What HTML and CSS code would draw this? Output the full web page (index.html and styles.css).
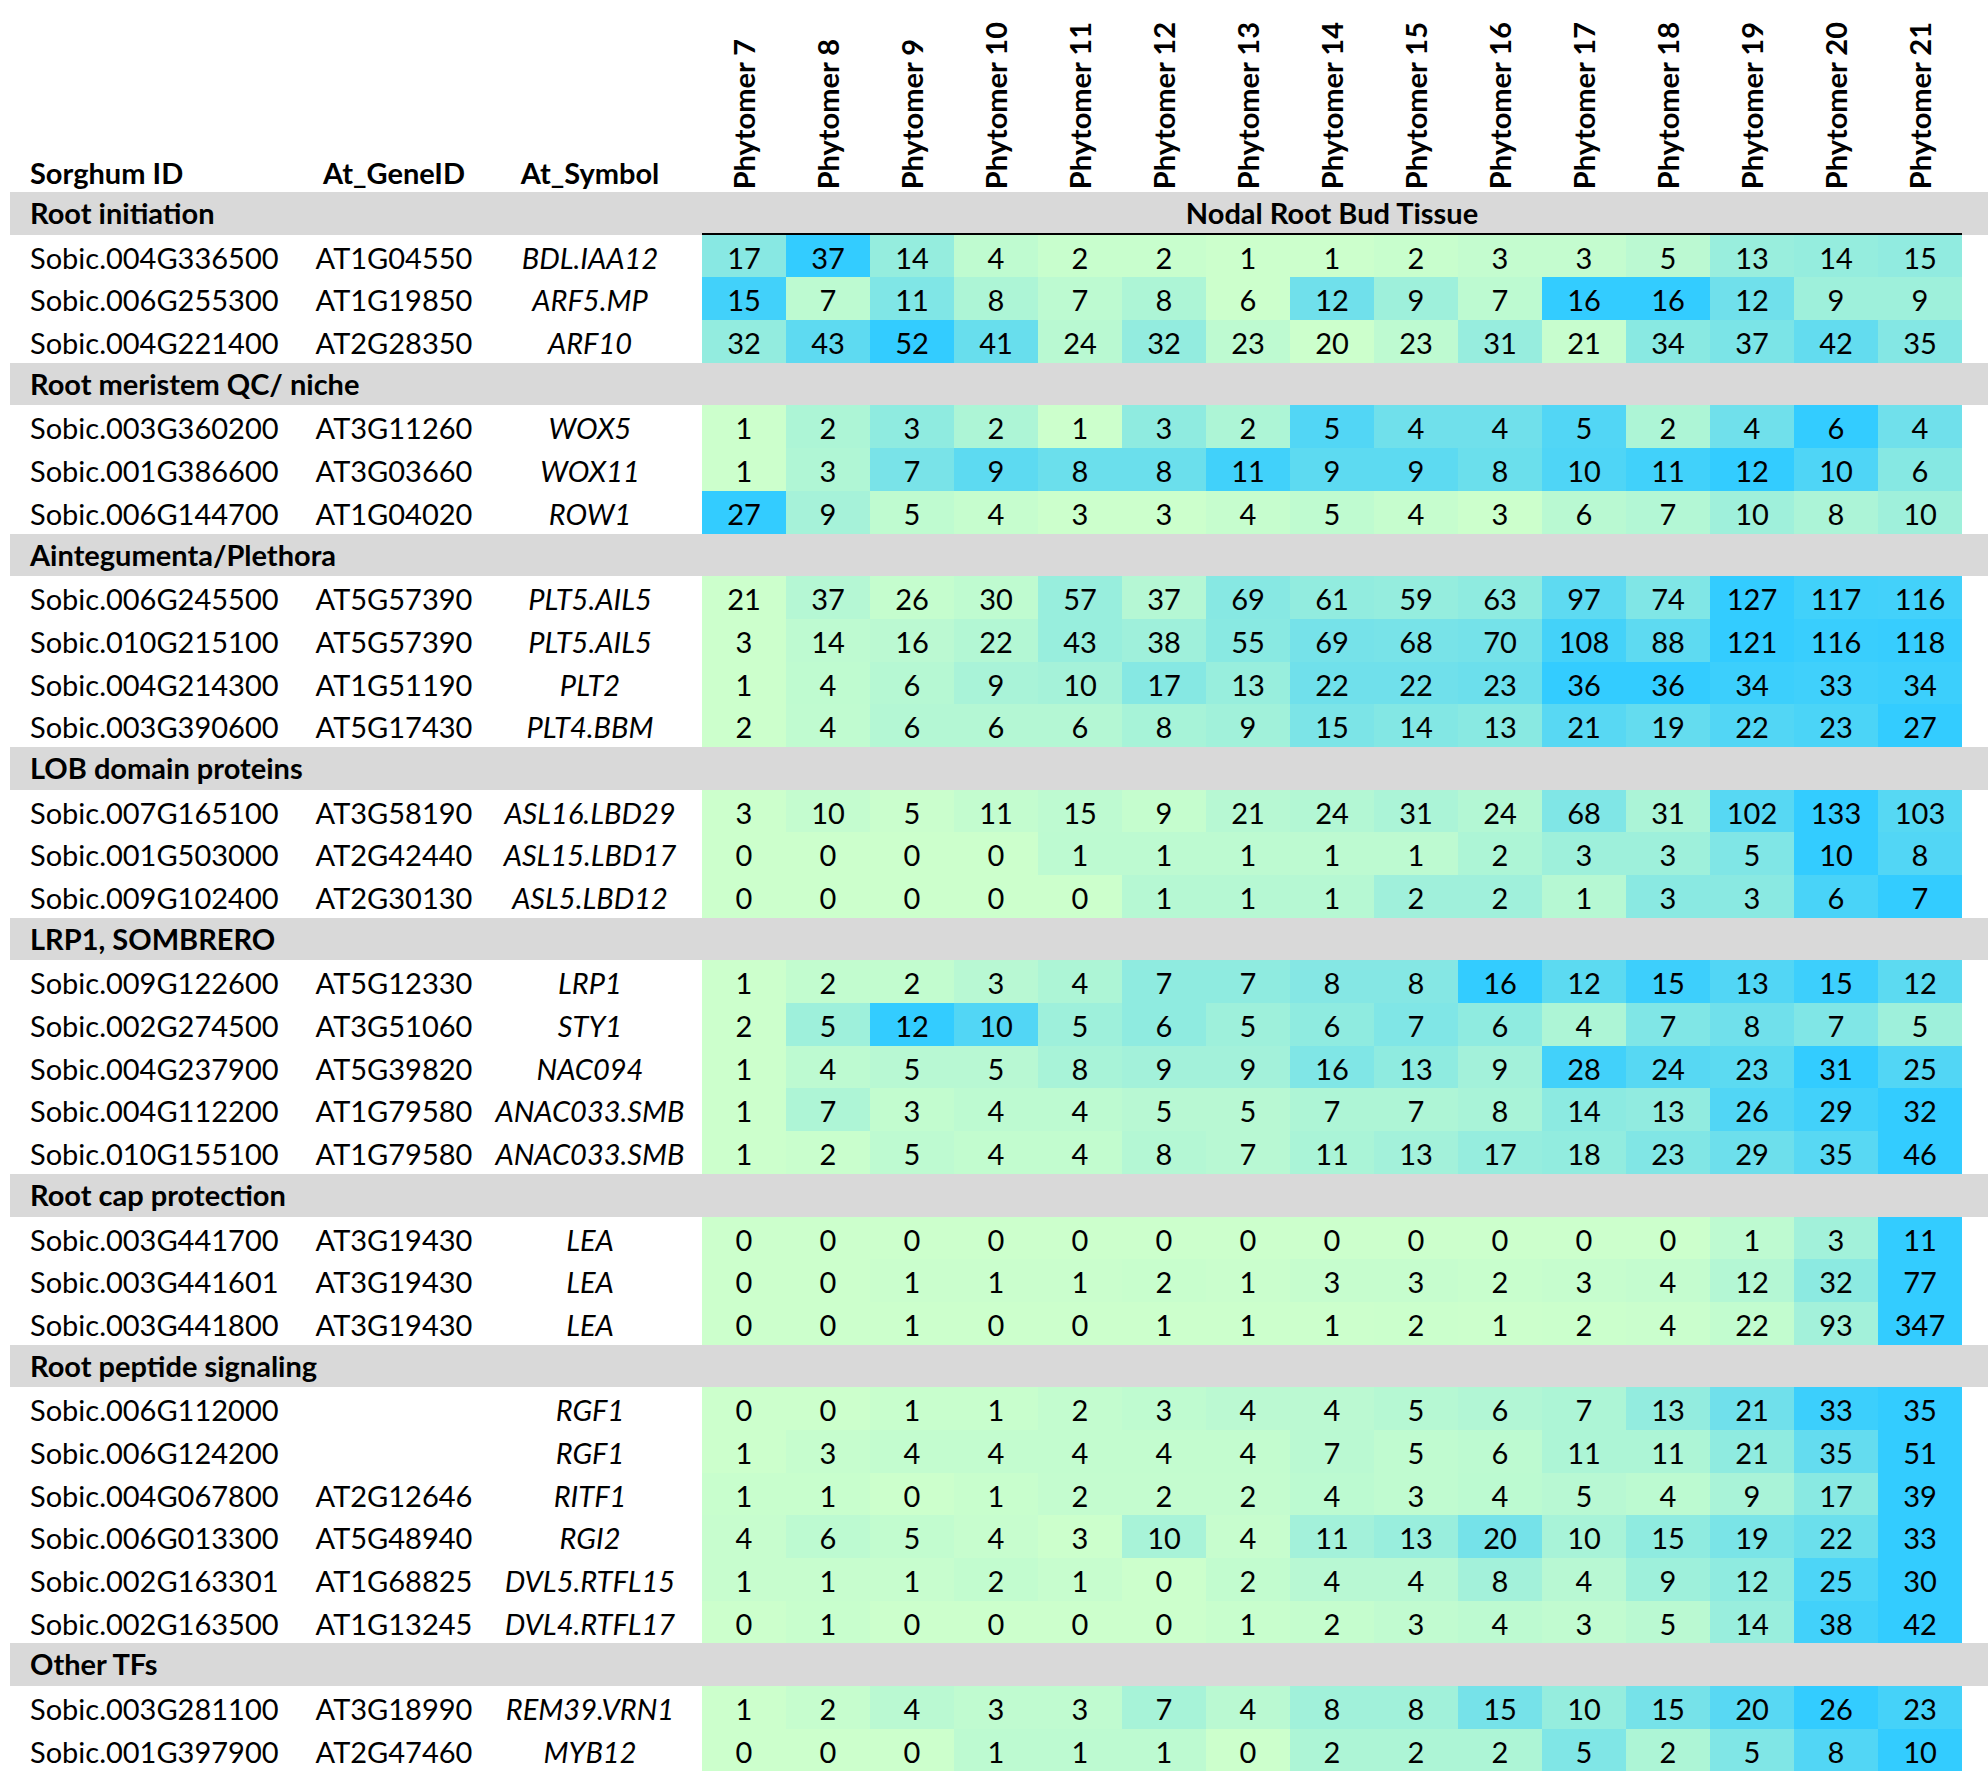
FILE: index.html
```html
<!DOCTYPE html>
<html lang="en">
<head>
    <meta charset="UTF-8">
    <title>Nodal Root Bud Tissue - gene expression</title>
    <link rel="stylesheet" href="styles.css">
</head>
<body>
    <div class="sheet">
        <div class="row head" id="head">
            <div class="cell id">Sorghum ID</div>
            <div class="cell gene">At_GeneID</div>
            <div class="cell sym">At_Symbol</div>
        </div>
        <div id="rows"></div>
    </div>

    <script>
        const groups = [
            ["Root initiation", [
                ["Sobic.004G336500", "AT1G04550", "BDL.IAA12", [17, 37, 14, 4, 2, 2, 1, 1, 2, 3, 3, 5, 13, 14, 15]],
                ["Sobic.006G255300", "AT1G19850", "ARF5.MP", [15, 7, 11, 8, 7, 8, 6, 12, 9, 7, 16, 16, 12, 9, 9]],
                ["Sobic.004G221400", "AT2G28350", "ARF10", [32, 43, 52, 41, 24, 32, 23, 20, 23, 31, 21, 34, 37, 42, 35]]
            ]],
            ["Root meristem QC/ niche", [
                ["Sobic.003G360200", "AT3G11260", "WOX5", [1, 2, 3, 2, 1, 3, 2, 5, 4, 4, 5, 2, 4, 6, 4]],
                ["Sobic.001G386600", "AT3G03660", "WOX11", [1, 3, 7, 9, 8, 8, 11, 9, 9, 8, 10, 11, 12, 10, 6]],
                ["Sobic.006G144700", "AT1G04020", "ROW1", [27, 9, 5, 4, 3, 3, 4, 5, 4, 3, 6, 7, 10, 8, 10]]
            ]],
            ["Aintegumenta/Plethora", [
                ["Sobic.006G245500", "AT5G57390", "PLT5.AIL5", [21, 37, 26, 30, 57, 37, 69, 61, 59, 63, 97, 74, 127, 117, 116]],
                ["Sobic.010G215100", "AT5G57390", "PLT5.AIL5", [3, 14, 16, 22, 43, 38, 55, 69, 68, 70, 108, 88, 121, 116, 118]],
                ["Sobic.004G214300", "AT1G51190", "PLT2", [1, 4, 6, 9, 10, 17, 13, 22, 22, 23, 36, 36, 34, 33, 34]],
                ["Sobic.003G390600", "AT5G17430", "PLT4.BBM", [2, 4, 6, 6, 6, 8, 9, 15, 14, 13, 21, 19, 22, 23, 27]]
            ]],
            ["LOB domain proteins", [
                ["Sobic.007G165100", "AT3G58190", "ASL16.LBD29", [3, 10, 5, 11, 15, 9, 21, 24, 31, 24, 68, 31, 102, 133, 103]],
                ["Sobic.001G503000", "AT2G42440", "ASL15.LBD17", [0, 0, 0, 0, 1, 1, 1, 1, 1, 2, 3, 3, 5, 10, 8]],
                ["Sobic.009G102400", "AT2G30130", "ASL5.LBD12", [0, 0, 0, 0, 0, 1, 1, 1, 2, 2, 1, 3, 3, 6, 7]]
            ]],
            ["LRP1, SOMBRERO", [
                ["Sobic.009G122600", "AT5G12330", "LRP1", [1, 2, 2, 3, 4, 7, 7, 8, 8, 16, 12, 15, 13, 15, 12]],
                ["Sobic.002G274500", "AT3G51060", "STY1", [2, 5, 12, 10, 5, 6, 5, 6, 7, 6, 4, 7, 8, 7, 5]],
                ["Sobic.004G237900", "AT5G39820", "NAC094", [1, 4, 5, 5, 8, 9, 9, 16, 13, 9, 28, 24, 23, 31, 25]],
                ["Sobic.004G112200", "AT1G79580", "ANAC033.SMB", [1, 7, 3, 4, 4, 5, 5, 7, 7, 8, 14, 13, 26, 29, 32]],
                ["Sobic.010G155100", "AT1G79580", "ANAC033.SMB", [1, 2, 5, 4, 4, 8, 7, 11, 13, 17, 18, 23, 29, 35, 46]]
            ]],
            ["Root cap protection", [
                ["Sobic.003G441700", "AT3G19430", "LEA", [0, 0, 0, 0, 0, 0, 0, 0, 0, 0, 0, 0, 1, 3, 11]],
                ["Sobic.003G441601", "AT3G19430", "LEA", [0, 0, 1, 1, 1, 2, 1, 3, 3, 2, 3, 4, 12, 32, 77]],
                ["Sobic.003G441800", "AT3G19430", "LEA", [0, 0, 1, 0, 0, 1, 1, 1, 2, 1, 2, 4, 22, 93, 347]]
            ]],
            ["Root peptide signaling", [
                ["Sobic.006G112000", "", "RGF1", [0, 0, 1, 1, 2, 3, 4, 4, 5, 6, 7, 13, 21, 33, 35]],
                ["Sobic.006G124200", "", "RGF1", [1, 3, 4, 4, 4, 4, 4, 7, 5, 6, 11, 11, 21, 35, 51]],
                ["Sobic.004G067800", "AT2G12646", "RITF1", [1, 1, 0, 1, 2, 2, 2, 4, 3, 4, 5, 4, 9, 17, 39]],
                ["Sobic.006G013300", "AT5G48940", "RGI2", [4, 6, 5, 4, 3, 10, 4, 11, 13, 20, 10, 15, 19, 22, 33]],
                ["Sobic.002G163301", "AT1G68825", "DVL5.RTFL15", [1, 1, 1, 2, 1, 0, 2, 4, 4, 8, 4, 9, 12, 25, 30]],
                ["Sobic.002G163500", "AT1G13245", "DVL4.RTFL17", [0, 1, 0, 0, 0, 0, 1, 2, 3, 4, 3, 5, 14, 38, 42]]
            ]],
            ["Other TFs", [
                ["Sobic.003G281100", "AT3G18990", "REM39.VRN1", [1, 2, 4, 3, 3, 7, 4, 8, 8, 15, 10, 15, 20, 26, 23]],
                ["Sobic.001G397900", "AT2G47460", "MYB12", [0, 0, 0, 1, 1, 1, 0, 2, 2, 2, 5, 2, 5, 8, 10]]
            ]]
        ];

        // two-colour scale per row, like the spreadsheet: light green -> sky blue
        const low = [204, 255, 204];
        const high = [51, 204, 255];

        function shade(v, min, max) {
            let t = max > min ? (v - min) / (max - min) : 0;
            let rgb = low.map((c, i) => Math.round(c + (high[i] - c) * t));
            return `rgb(${rgb.join(",")})`;
        }

        function cell(cls, text) {
            let div = document.createElement("div");
            div.className = "cell " + cls;
            div.textContent = text;
            return div;
        }

        let head = document.getElementById("head");
        for (let p = 7; p <= 21; p++) {
            let th = document.createElement("div");
            th.className = "cell phy";
            th.innerHTML = `<span>Phytomer ${p}</span>`;
            head.appendChild(th);
        }

        let rows = document.getElementById("rows");
        groups.forEach(([title, genes], gi) => {
            let sec = document.createElement("div");
            sec.className = "row section";
            sec.appendChild(cell("title", title));
            if (gi === 0) sec.appendChild(cell("tissue", "Nodal Root Bud Tissue"));
            rows.appendChild(sec);

            genes.forEach(([id, gene, sym, values]) => {
                let row = document.createElement("div");
                row.className = "row gene-row";
                row.appendChild(cell("id", id));
                row.appendChild(cell("gene", gene));
                row.appendChild(cell("sym", sym));
                let min = Math.min(...values);
                let max = Math.max(...values);
                values.forEach(v => {
                    let td = cell("num", v);
                    td.style.background = shade(v, min, max);
                    row.appendChild(td);
                });
                rows.appendChild(row);
            });
        });
    </script>
</body>
</html>
```

FILE: styles.css
```css
body {
    margin: 0;
    background: #fff;
    color: #000;
    font-family: Lato, "Open Sans", sans-serif;
    font-size: 29px;
}
.sheet {
    padding: 0 0 0 10px;
}
.row {
    display: grid;
    grid-template-columns: 290px 178px 224px repeat(15, 84px) 13px;
    height: 42.7px;
}
.cell {
    box-sizing: border-box;
    height: 100%;
    line-height: 1.2;
    padding-top: 6px;
    white-space: nowrap;
}
.id {
    padding-left: 20px;
}
.gene {
    text-align: center;
    padding-left: 10px;
}
.sym {
    text-align: center;
    font-style: italic;
}
.num {
    text-align: center;
}

/* column titles */
.head {
    height: 192px;
    font-weight: bold;
}
.head .cell {
    height: auto;
    align-self: end;
    padding-top: 0;
    padding-bottom: 1px;
}
.head .sym {
    font-style: normal;
}
.head .phy {
    display: flex;
    justify-content: center;
    padding-bottom: 3px;
}
.phy span {
    writing-mode: vertical-rl;
    transform: rotate(180deg);
}

/* group bands */
.section {
    background: #d9d9d9;
    font-weight: bold;
}
.section .title {
    grid-column: 1 / 4;
    padding-left: 20px;
    padding-top: 4px;
}
.section .tissue {
    grid-column: 4 / 19;
    text-align: center;
    padding-top: 4px;
    border-bottom: 2px solid #000;
}
```
